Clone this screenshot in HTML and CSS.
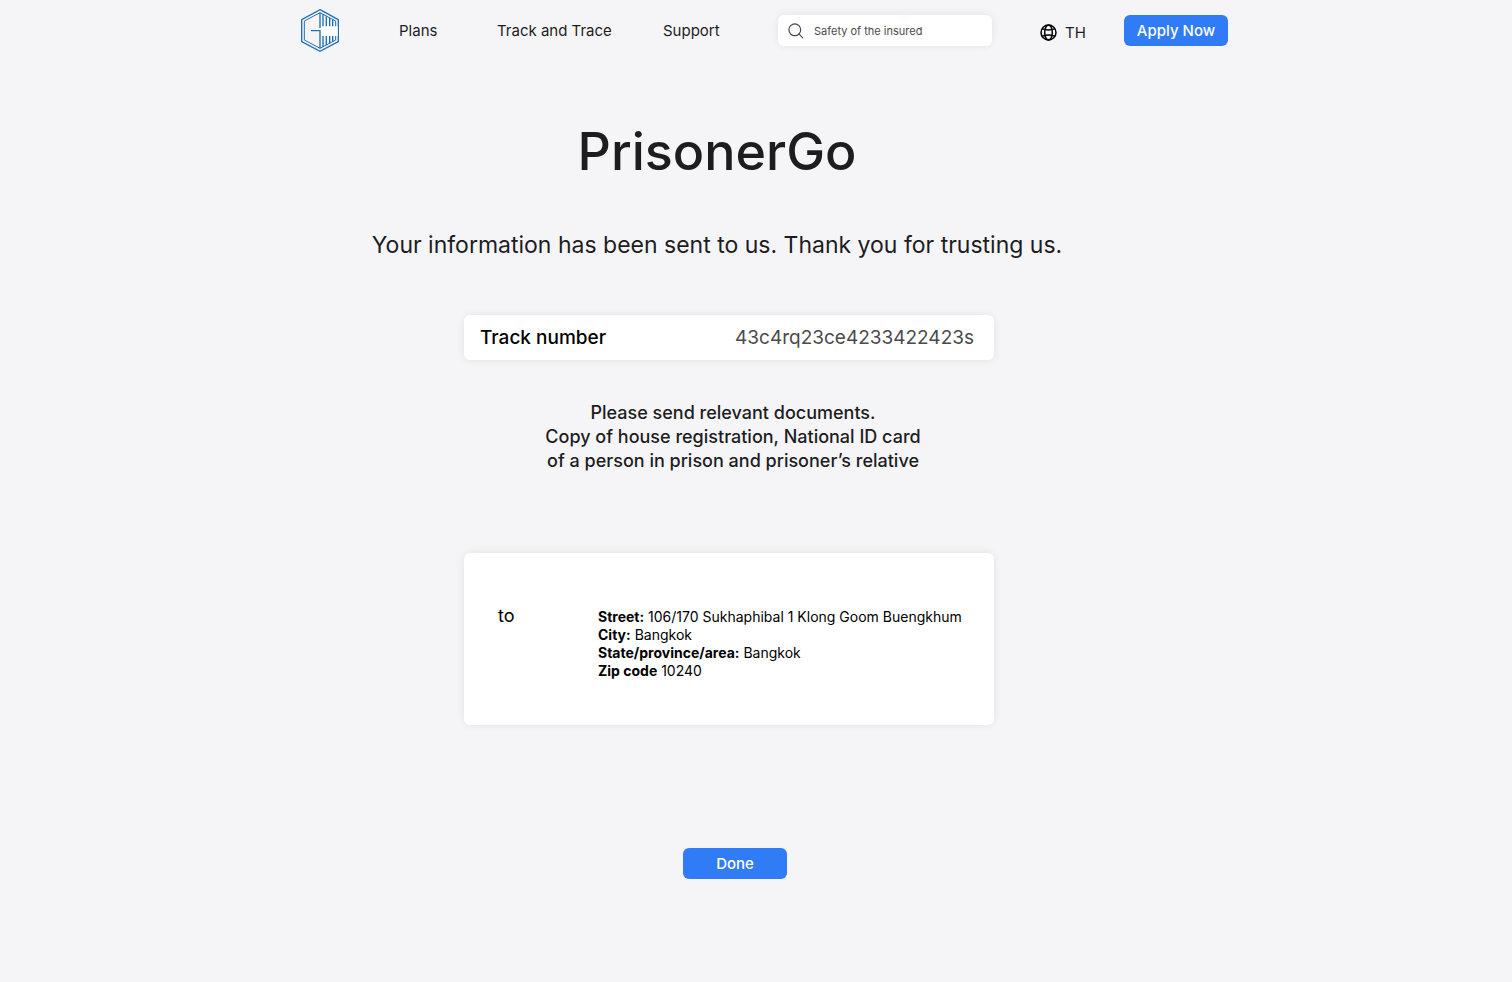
FILE: index.html
```
<!DOCTYPE html>
<html lang="en">
<head>
<meta charset="utf-8">
<meta name="viewport" content="width=device-width, initial-scale=1">
<title>PrisonerGo</title>
<link rel="stylesheet" href="styles.css">
</head>
<body>
<header class="header">
  <nav class="nav" aria-label="Main">
    <a class="logo" href="#" aria-label="Home">
      <svg width="40" height="45" viewBox="27 24 120 135" fill="none" stroke="#1f6fb5" aria-hidden="true">
        <path d="M87 29 142 59V125L87 154 32 125V59Z" stroke-width="4"/>
        <path d="M87 38 134 63V120L87 145 40 120V63Z" stroke-width="3"/>
        <path d="M87 38V84M96 43V80M106 49V80M116 54V80M125 59V80" stroke-width="4"/>
        <path d="M96 107V140M106 107V135M116 107V130M125 107V125" stroke-width="4"/>
        <path d="M60 92H87V145" stroke-width="4"/>
        <path d="M92 79H140V108H92Z" fill="#fff" stroke="none"/>
      </svg>
    </a>
    <a class="link" href="#">Plans</a>
    <a class="link" href="#">Track and Trace</a>
    <a class="link" href="#">Support</a>
    <label class="search">
      <svg width="16" height="16" viewBox="0 0 16 16" fill="none" stroke="#4a4a4a" stroke-width="1.2" stroke-linecap="round" aria-hidden="true"><circle cx="6.8" cy="6.8" r="5.9"/><path d="m11.2 11.2 3.6 3.6"/></svg>
      <input type="search" placeholder="Safety of the insured" aria-label="Search">
    </label>
    <button class="language" type="button">
      <svg width="17" height="17" viewBox="0 0 17 17" fill="none" stroke="#000" stroke-width="1.5" aria-hidden="true"><circle cx="8.5" cy="8.5" r="7.5"/><ellipse cx="8.5" cy="8.5" rx="3.8" ry="7.5"/><path d="M2.2 4.9Q8.5 7.1 14.8 4.9M2.2 12.1Q8.5 9.9 14.8 12.1"/></svg>
      TH
    </button>
    <button class="button" type="button">Apply Now</button>
  </nav>
</header>
<main class="main">
  <div class="intro">
    <h1 class="title">PrisonerGo</h1>
    <p class="message">Your information has been sent to us. Thank you for trusting us.</p>
  </div>
  <section class="card track">
    <span class="track-label">Track number</span>
    <span class="track-number">43c4rq23ce4233422423s</span>
  </section>
  <p class="documents">Please send relevant documents.<br>Copy of house registration, National ID card<br>of a person in prison and prisoner’s relative</p>
  <section class="card address">
    <span class="to">to</span>
    <address class="lines"><b>Street:</b> 106/170 Sukhaphibal 1 Klong Goom Buengkhum<br><b>City:</b> Bangkok<br><b>State/province/area:</b> Bangkok<br><b>Zip code</b> 10240</address>
  </section>
  <button class="button done" type="button">Done</button>
</main>
</body>
</html>
```
FILE: styles.css
```
* {
  box-sizing: border-box;
}

body {
  margin: 0;
  min-height: 100vh;
  background: #f5f5f7;
  color: #1d1d1f;
  font-family: Inter, "Liberation Sans", sans-serif;
}

button,
input {
  font-family: inherit;
}

.header {
  padding: 8px 0 0 16px;
}

.nav {
  display: grid;
  grid-template-columns: 99px 98px 166px 115px 262px 84px 104px;
  justify-content: center;
  align-items: center;
}

.logo {
  display: flex;
}

.link {
  color: inherit;
  font-size: 15px;
  line-height: 20px;
  text-decoration: none;
}

.search {
  display: flex;
  align-items: center;
  gap: 10px;
  width: 214px;
  height: 31px;
  padding: 0 10px;
  border-radius: 6px;
  background: #fff;
  box-shadow: 0 0 8px rgba(0, 0, 0, 0.08);
}

.search input {
  flex: 1;
  min-width: 0;
  padding: 0;
  border: 0;
  outline: 0;
  background: none;
  color: #4a4a4a;
  font-size: 11px;
}

.search input::placeholder {
  color: #4a4a4a;
}

.language {
  display: flex;
  align-items: center;
  gap: 8px;
  padding: 4px 0 0;
  border: 0;
  background: none;
  color: inherit;
  font-size: 15px;
  line-height: 20px;
}

.button {
  width: 104px;
  height: 31px;
  padding: 0;
  border: 0;
  border-radius: 6px;
  background: #2f7cf6;
  color: #fff;
  font-size: 15px;
  font-weight: 500;
}

.main {
  display: flex;
  flex-direction: column;
  align-items: center;
  padding: 65px 54px 64px 0;
}

.intro {
  padding-right: 24px;
  text-align: center;
}

.title {
  margin: 0;
  font-size: 52px;
  font-weight: 500;
  line-height: 68px;
}

.message {
  margin: 43px 0 54px;
  font-size: 23px;
  line-height: 32px;
}

.card {
  display: flex;
  width: 100%;
  max-width: 530px;
  border-radius: 6px;
  background: #fff;
  color: #000;
  box-shadow: 0 0 8px rgba(0, 0, 0, 0.08);
}

.track {
  align-items: center;
  justify-content: space-between;
  padding: 10px 20px 10px 16px;
  font-size: 19px;
  line-height: 25px;
}

.track-label {
  font-weight: 500;
}

.track-number {
  color: #4a4a4a;
}

.documents {
  margin: 41px 0 80px;
  padding-left: 8px;
  font-size: 18px;
  font-weight: 500;
  line-height: 24px;
  text-align: center;
}

.address {
  padding: 50px 24px 45px 34px;
}

.to {
  width: 100px;
  font-size: 18px;
  line-height: 25px;
}

.lines {
  padding-top: 5px;
  font-size: 14px;
  font-style: normal;
  line-height: 18px;
}

.done {
  margin: 123px 0 0 12px;
}
```
